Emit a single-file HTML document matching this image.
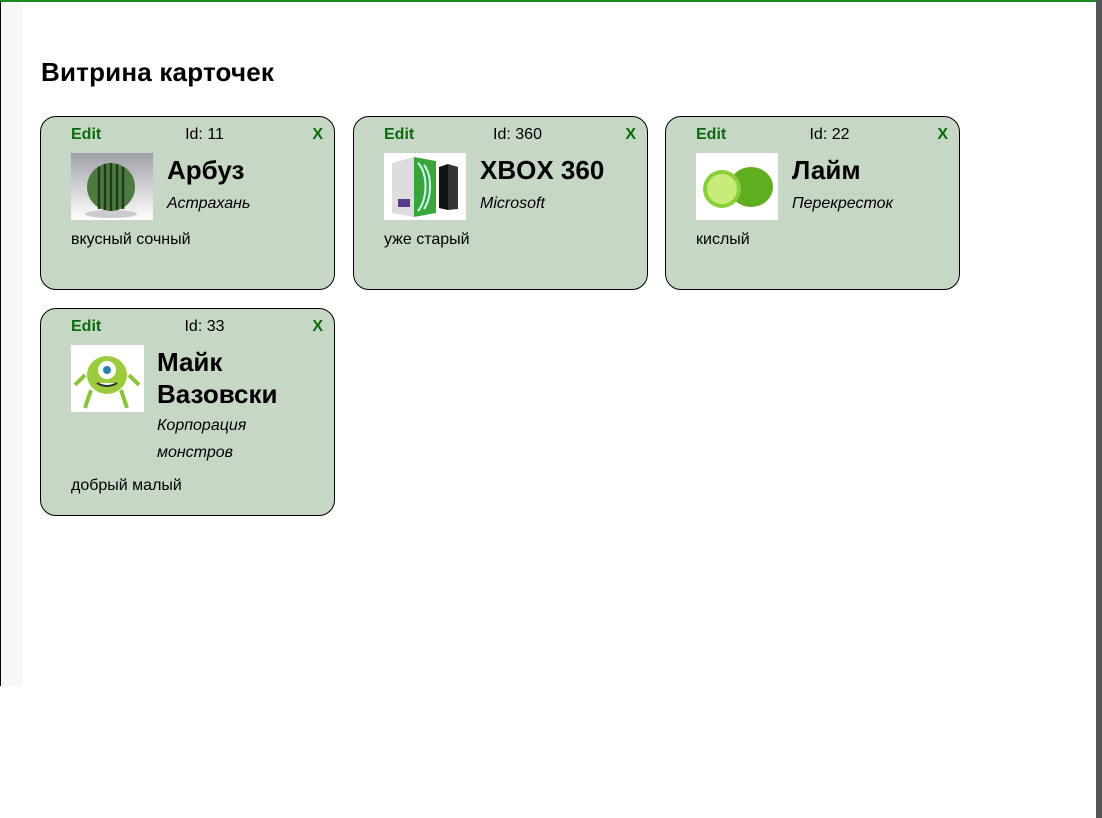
<!DOCTYPE html>
<html><head><meta charset="utf-8"><style>
*{box-sizing:border-box}
body{margin:0;width:1102px;height:818px;background:#fff;position:relative;overflow:hidden;font-family:"Liberation Sans",Roboto,sans-serif}
.lb{position:absolute;left:0;top:0;width:22px;height:686px;background:#f7f7f7;border-left:1px solid #000}
.top{position:absolute;left:0;top:0;width:1096px;height:2px;background:#1a8a1a}
.rb{position:absolute;right:0;top:0;width:6px;height:818px;background:#55565a}
h1{position:absolute;left:41px;top:57px;margin:0;font-size:26px;font-weight:bold;letter-spacing:0.2px}
.card{position:absolute;width:295px;background:#c6d7c5;border:1px solid #000;border-radius:16px}
.e{position:absolute;left:30px;top:9px;color:#0d6a0d;font-weight:bold;font-size:16px}
.x{position:absolute;right:11px;top:9px;color:#0d6a0d;font-weight:bold;font-size:16px}
.id{position:absolute;left:17px;width:100%;text-align:center;top:9px;font-size:16px}
.img{position:absolute;left:30px;top:36px;height:67px}
.t{position:absolute;font-size:26px;font-weight:bold;line-height:32px}
.s{position:absolute;font-size:16px;font-style:italic;line-height:27px}
.d{position:absolute;left:30px;font-size:16px}
</style></head><body>
<div class="lb"></div><div class="top"></div><div class="rb"></div>
<h1>Витрина карточек</h1>

<div class="card" style="left:40px;top:116px;height:174px">
<div class="e">Edit</div><div class="id">Id: 11</div><div class="x">X</div>
<svg class="img" style="width:82px" viewBox="0 0 82 67"><defs><linearGradient id="g1" x1="0" y1="0" x2="0" y2="1"><stop offset="0" stop-color="#9fa0a8"/><stop offset="1" stop-color="#fff"/></linearGradient></defs><rect width="82" height="67" fill="url(#g1)"/><ellipse cx="40" cy="61" rx="26" ry="4" fill="#ccc"/><circle cx="40" cy="34" r="24" fill="#4d7b3f"/><path d="M28 14v42M34 11v46M40 10v48M46 11v46M52 14v42" stroke="#1f3a1d" stroke-width="2.5"/></svg>
<div class="t" style="left:126px;top:37px">Арбуз</div>
<div class="s" style="left:126px;top:73px">Астрахань</div>
<div class="d" style="top:114px">вкусный сочный</div>
</div>

<div class="card" style="left:353px;top:116px;height:174px">
<div class="e">Edit</div><div class="id">Id: 360</div><div class="x">X</div>
<svg class="img" style="width:82px" viewBox="0 0 82 67"><rect width="82" height="67" fill="#fff"/><path d="M8 10l22-6v60l-22-4z" fill="#ddd"/><path d="M30 4l22 4v52l-22 4z" fill="#3aa53a"/><path d="M34 10c10 10 10 36 0 48M40 12c8 10 8 32 0 44" stroke="#cfe" stroke-width="2" fill="none"/><path d="M55 14l9-3v46l-9-2z" fill="#111"/><path d="M64 11l10 3v42l-10 1z" fill="#333"/><rect x="14" y="46" width="12" height="8" fill="#5a3a8a"/></svg>
<div class="t" style="left:126px;top:37px">XBOX 360</div>
<div class="s" style="left:126px;top:73px">Microsoft</div>
<div class="d" style="top:114px">уже старый</div>
</div>

<div class="card" style="left:665px;top:116px;height:174px">
<div class="e">Edit</div><div class="id">Id: 22</div><div class="x">X</div>
<svg class="img" style="width:82px" viewBox="0 0 82 67"><rect width="82" height="67" fill="#fff"/><ellipse cx="55" cy="34" rx="22" ry="20" fill="#5fae1f"/><circle cx="26" cy="36" r="19" fill="#8bcf3a"/><circle cx="26" cy="36" r="15" fill="#c8ec7a"/></svg>
<div class="t" style="left:126px;top:37px">Лайм</div>
<div class="s" style="left:126px;top:73px">Перекресток</div>
<div class="d" style="top:114px">кислый</div>
</div>

<div class="card" style="left:40px;top:308px;height:208px">
<div class="e">Edit</div><div class="id">Id: 33</div><div class="x">X</div>
<svg class="img" style="width:73px" viewBox="0 0 73 67"><rect width="73" height="67" fill="#fff"/><path d="M20 45l-6 18M50 45l6 18M14 30l-10 10M58 30l10 10" stroke="#8bc43a" stroke-width="4"/><ellipse cx="36" cy="30" rx="20" ry="19" fill="#9ccb3e"/><circle cx="36" cy="25" r="9" fill="#fff"/><circle cx="36" cy="25" r="4" fill="#2a7fae"/><path d="M26 38q10 6 20 0" stroke="#333" stroke-width="2" fill="#fff"/></svg>
<div class="t" style="left:116px;top:37px">Майк<br>Вазовски</div>
<div class="s" style="left:116px;top:103px">Корпорация<br>монстров</div>
<div class="d" style="top:168px">добрый малый</div>
</div>
</body></html>
